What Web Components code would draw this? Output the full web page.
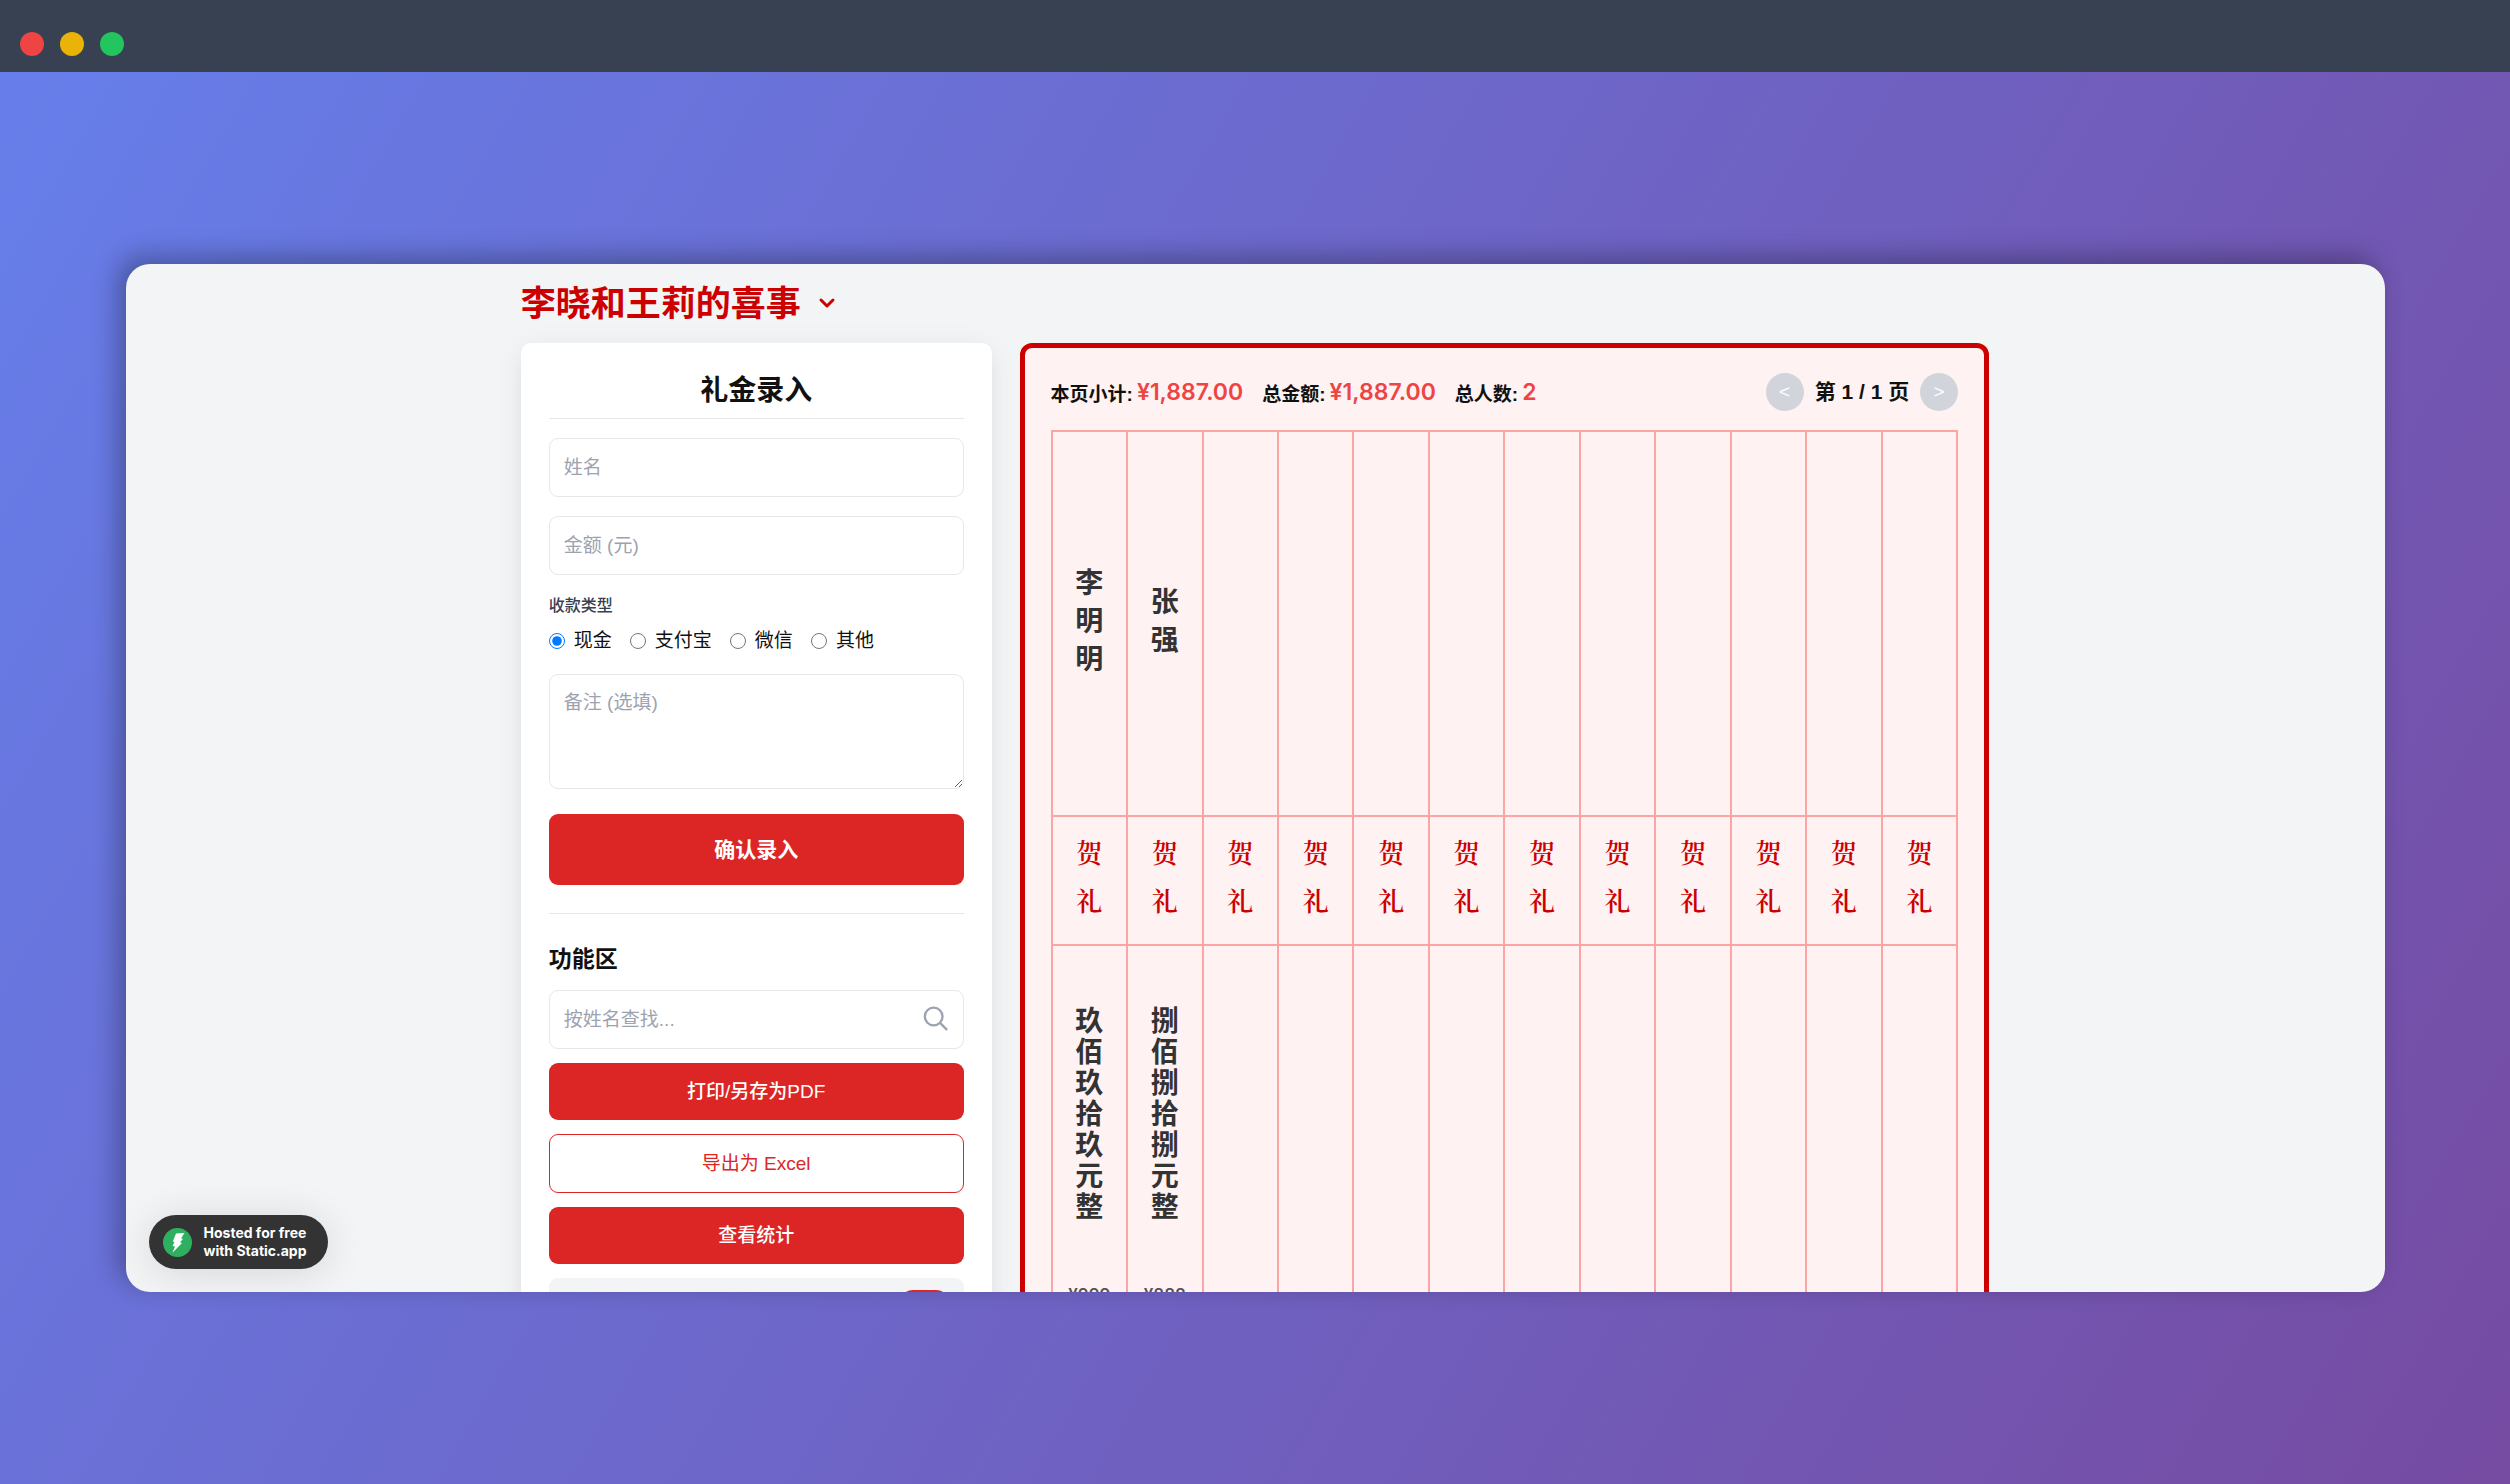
<!DOCTYPE html>
<html lang="zh-CN">
<head>
<meta charset="UTF-8">
<title>李晓和王莉的喜事</title>
<style>
    html, body { height: 100%; }
    body {
        margin: 0;
        overflow: hidden;
        font-family: "Liberation Sans", "Noto Sans CJK SC", sans-serif;
        color: #111;
    }
</style>
</head>
<body>
<browser-frame>
    <gift-app name="李晓和王莉的喜事">
        <entry-panel></entry-panel>
        <gift-book></gift-book>
    </gift-app>
    <host-badge slot="badge"></host-badge>
</browser-frame>

<script>
const resetStyles = `
    *, *::before, *::after { box-sizing: border-box; }
    h1, h2, h3, p, fieldset { margin: 0; padding: 0; border: 0; min-width: 0; }
    button, input, textarea { font: inherit; color: inherit; margin: 0; }
    button { cursor: pointer; border: 0; padding: 0; background: none; }
`;

class BrowserFrame extends HTMLElement {
    constructor() {
        super();
        const shadow = this.attachShadow({mode: 'open'});
        shadow.innerHTML = `
            <style>
                ${resetStyles}
                :host { display: flex; flex-direction: column; height: 100vh; }
                header { display: flex; gap: 16px; padding: 32px 20px 16px; background: #374151; }
                i { width: 24px; height: 24px; border-radius: 50%; }
                .close { background: #ef4444; }
                .min { background: #eab308; }
                .max { background: #22c55e; }
                main {
                    flex: 1;
                    min-height: 0;
                    display: flex;
                    padding: 192px 5%;
                    background: linear-gradient(120deg, #667eea 0%, #764ba2 100%);
                }
                .window {
                    flex: 1;
                    position: relative;
                    overflow: hidden;
                    border-radius: 24px;
                    background: #f3f4f6;
                    box-shadow: -8px -8px 26px rgba(0, 0, 0, 0.3);
                }
                slot[name="badge"] { position: absolute; left: 23px; bottom: 23px; display: block; }
            </style>
            <header><i class="close"></i><i class="min"></i><i class="max"></i></header>
            <main>
                <div class="window">
                    <slot></slot>
                    <slot name="badge"></slot>
                </div>
            </main>
        `;
    }
}

class GiftApp extends HTMLElement {
    constructor() {
        super();
        const shadow = this.attachShadow({mode: 'open'});
        const name = this.getAttribute('name') || '';
        shadow.innerHTML = `
            <style>
                ${resetStyles}
                :host { display: block; width: 65%; margin: 0 auto; padding-top: 18px; }
                .title { display: flex; align-items: center; gap: 14px; color: #c00; }
                h1 { font-size: 35px; line-height: 44px; font-weight: 700; }
                svg { display: block; width: 24px; height: 24px; }
                .columns {
                    display: grid;
                    grid-template-columns: repeat(3, minmax(0, 1fr));
                    gap: 28px;
                    align-items: start;
                    margin-top: 17px;
                }
                ::slotted(gift-book) { grid-column: span 2; }
            </style>
            <div class="title">
                <h1>${name}</h1>
                <button type="button" aria-label="展开">
                    <svg viewBox="0 0 24 24" fill="none" stroke="currentColor" stroke-width="3" stroke-linecap="round" stroke-linejoin="round"><path d="M6 8l6 6 6-6"/></svg>
                </button>
            </div>
            <div class="columns"><slot></slot></div>
        `;
    }
}

class EntryPanel extends HTMLElement {
    constructor() {
        super();
        const shadow = this.attachShadow({mode: 'open'});
        const types = ['现金', '支付宝', '微信', '其他'];
        shadow.innerHTML = `
            <style>
                ${resetStyles}
                :host {
                    display: block;
                    padding: 28px;
                    border-radius: 10px;
                    background: #fff;
                    box-shadow: 0 12px 18px -4px rgba(0, 0, 0, 0.06), 0 4px 30px rgba(0, 0, 0, 0.06);
                    font-size: 19px;
                    line-height: 28px;
                }
                h2 {
                    padding-bottom: 8px;
                    border-bottom: 1px solid #e5e7eb;
                    font-size: 28px;
                    line-height: 39px;
                    text-align: center;
                }
                h3 { font-size: 23px; line-height: 34px; margin-bottom: 14px; }
                form { display: flex; flex-direction: column; gap: 19px; margin-top: 19px; }
                .field {
                    display: block;
                    width: 100%;
                    height: 59px;
                    padding: 14px;
                    border: 1px solid #e5e7eb;
                    border-radius: 9px;
                    background: #fff;
                    outline: 0;
                }
                textarea.field { height: 115px; resize: vertical; }
                .field::placeholder { color: #9ca3af; opacity: 1; }
                legend { padding: 0; color: #374151; font-size: 16px; line-height: 24px; font-weight: 500; }
                .radios { display: flex; gap: 18px; margin-top: 9px; }
                .radios label { display: flex; align-items: center; gap: 9px; }
                .radios input { width: 16px; height: 16px; accent-color: #007aff; }
                .btn {
                    display: block;
                    width: 100%;
                    height: 57px;
                    border-radius: 9px;
                    background: #dc2626;
                    color: #fff;
                    font-weight: 500;
                }
                .submit { height: 71px; margin-top: 6px; font-size: 21px; font-weight: 700; }
                .outline { height: 59px; border: 1px solid #dc2626; background: #fff; color: #dc2626; font-weight: 400; }
                .tools { margin-top: 28px; padding-top: 28px; border-top: 1px solid #e5e7eb; }
                .stack { display: flex; flex-direction: column; gap: 14px; }
                .search { display: grid; align-items: center; }
                .search > * { grid-area: 1 / 1; }
                .search svg { width: 28px; height: 28px; margin-right: 14px; justify-self: end; color: #9ca3af; }
                .setting {
                    display: flex;
                    justify-content: flex-end;
                    padding: 12px 14px;
                    border-radius: 9px;
                    background: #f3f4f6;
                }
                .setting input {
                    appearance: none;
                    width: 51px;
                    height: 28px;
                    border-radius: 14px;
                    background: #dc2626;
                }
            </style>
            <h2>礼金录入</h2>
            <form>
                <input class="field" type="text" placeholder="姓名" aria-label="姓名">
                <input class="field" type="text" placeholder="金额 (元)" aria-label="金额 (元)">
                <fieldset>
                    <legend>收款类型</legend>
                    <div class="radios">
                        ${types.map((type, i) => `<label><input type="radio" name="type" value="${type}"${i === 0 ? ' checked' : ''}>${type}</label>`).join('')}
                    </div>
                </fieldset>
                <textarea class="field" placeholder="备注 (选填)" aria-label="备注 (选填)"></textarea>
                <button class="btn submit" type="button">确认录入</button>
            </form>
            <div class="tools">
                <h3>功能区</h3>
                <div class="stack">
                    <div class="search">
                        <input class="field" type="text" placeholder="按姓名查找..." aria-label="按姓名查找">
                        <svg viewBox="0 0 24 24" fill="none" stroke="currentColor" stroke-width="2" stroke-linecap="round"><circle cx="10" cy="9" r="7.600"/><path d="M15.500 14.500L21 20"/></svg>
                    </div>
                    <button class="btn" type="button">打印/另存为PDF</button>
                    <button class="btn outline" type="button">导出为 Excel</button>
                    <button class="btn" type="button">查看统计</button>
                    <div class="setting"><input type="checkbox" checked aria-label="开关"></div>
                </div>
            </div>
        `;
    }
}

class GiftBook extends HTMLElement {
    constructor() {
        super();
        const shadow = this.attachShadow({mode: 'open'});
        const gifts = [
            {name: '李明明', words: '玖佰玖拾玖元整', amount: '¥999'},
            {name: '张强', words: '捌佰捌拾捌元整', amount: '¥888'}
        ];
        shadow.innerHTML = `
            <style>
                ${resetStyles}
                :host {
                    display: block;
                    padding: 23px 26px;
                    border: 5px solid #c00;
                    border-radius: 12px;
                    background: #fef2f2;
                }
                .bar { display: flex; justify-content: space-between; align-items: center; height: 42px; }
                .stats { display: flex; gap: 19px; font-size: 19px; font-weight: 700; }
                .stats div { display: flex; align-items: center; gap: 4px; }
                .stats b { color: #ef4444; font: 600 23px/28px Inter, sans-serif; }
                .pager { display: flex; align-items: center; gap: 11px; font-size: 21px; line-height: 28px; font-weight: 700; }
                .pager button {
                    width: 38px;
                    height: 38px;
                    border-radius: 50%;
                    background: #d1d5db;
                    color: #fff;
                    font: 400 19px/38px "Liberation Sans", sans-serif;
                }
                table { width: 100%; margin-top: 17px; border-collapse: collapse; table-layout: fixed; }
                td { padding: 0; border: 2px solid #fca5a5; text-align: center; vertical-align: middle; }
                .names td { height: 385px; }
                .labels td { height: 129px; }
                .sums td { height: 386px; vertical-align: top; }
                p { width: 1em; margin: 0 auto; word-break: break-all; color: #333; font-size: 28px; font-weight: 700; }
                .names p { padding-bottom: 4px; line-height: 38px; }
                .labels p { padding-bottom: 10px; font: 600 26px/48px "Noto Serif CJK SC", "Noto Serif SC", "Noto Sans CJK SC", serif; color: #c00; }
                .sums p { padding: 60px 0; line-height: 31px; }
                small { display: block; color: #555; font: 600 17px/24px Inter, sans-serif; }
            </style>
            <div class="bar">
                <div class="stats">
                    <div><span>本页小计:</span><b>¥1,887.00</b></div>
                    <div><span>总金额:</span><b>¥1,887.00</b></div>
                    <div><span>总人数:</span><b>2</b></div>
                </div>
                <div class="pager">
                    <button type="button">&lt;</button>
                    <span>第 1 / 1 页</span>
                    <button type="button">&gt;</button>
                </div>
            </div>
            <table>
                <tr class="names">${this.cells(i => gifts[i] ? `<p>${gifts[i].name}</p>` : '')}</tr>
                <tr class="labels">${this.cells(() => '<p>贺礼</p>')}</tr>
                <tr class="sums">${this.cells(i => gifts[i] ? `<p>${gifts[i].words}</p><small>${gifts[i].amount}</small>` : '')}</tr>
            </table>
        `;
    }

    cells(content) {
        let html = '';
        for (let i = 0; i < 12; i++) {
            html += `<td>${content(i)}</td>`;
        }
        return html;
    }
}

class HostBadge extends HTMLElement {
    constructor() {
        super();
        const shadow = this.attachShadow({mode: 'open'});
        shadow.innerHTML = `
            <style>
                :host { display: block; }
                a {
                    display: flex;
                    align-items: center;
                    gap: 12px;
                    padding: 9px 21px 9px 14px;
                    border-radius: 27px;
                    background: #333;
                    box-shadow: 0 4px 40px rgba(0, 0, 0, 0.12);
                    color: #fff;
                    font: 700 14px/18px Inter, sans-serif;
                    text-decoration: none;
                }
                svg { width: 29px; height: 29px; }
            </style>
            <a href="#">
                <svg viewBox="0 0 29 29"><circle cx="14.500" cy="14.500" r="14.500" fill="#2fb061"/><path fill="#fff" d="M13 5.500L21.500 5L18 10.500L20 10.800L17 14.500L19 15L9.500 24.800L12 18.500L9.500 18L11.500 14L9.800 13.500Z"/></svg>
                <span>Hosted for free<br>with Static.app</span>
            </a>
        `;
    }
}

customElements.define('browser-frame', BrowserFrame);
customElements.define('gift-app', GiftApp);
customElements.define('entry-panel', EntryPanel);
customElements.define('gift-book', GiftBook);
customElements.define('host-badge', HostBadge);
</script>
</body>
</html>
